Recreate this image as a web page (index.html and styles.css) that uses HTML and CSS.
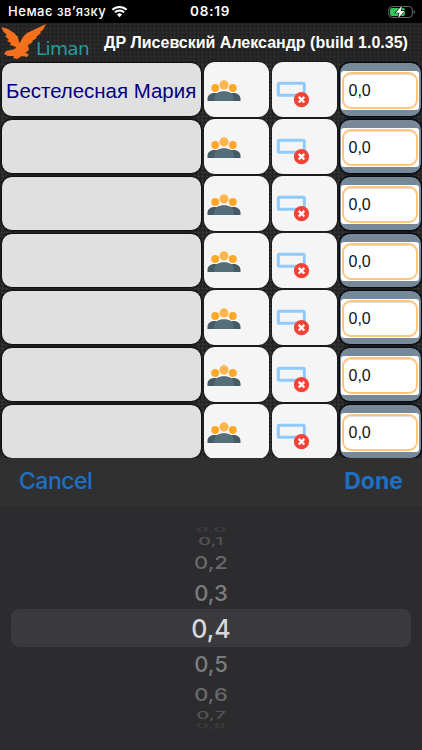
FILE: index.html
```html
<!DOCTYPE html>
<html lang="uk">
<head>
<meta charset="utf-8">
<title>Liman</title>
<link rel="stylesheet" href="styles.css">
</head>
<body>
<svg class="defs" aria-hidden="true">
  <symbol id="people" viewBox="0 0 34 22">
    <circle cx="8.2" cy="8" r="3.9" fill="#ffa726"/>
    <circle cx="25.8" cy="8" r="3.9" fill="#ffa726"/>
    <path d="M.5 21v-2.2c0-3.7 3.4-5.7 7.5-5.7 3 0 5.500 1 6.800 3V21zM33.500 21v-2.200c0-3.700-3.400-5.700-7.500-5.700-3 0-5.500 1-6.800 3V21z" fill="#455a64"/>
    <circle cx="17" cy="4.900" r="4.600" fill="#ffb74d"/>
    <path d="M7.200 21v-2.800c0-4.600 4.300-6.900 9.800-6.900s9.800 2.300 9.800 6.900V21z" fill="#546e7a"/>
  </symbol>
  <symbol id="remove" viewBox="0 0 34 28">
    <rect x="2.300" y="2.300" width="26" height="12" rx="1" fill="none" stroke="#90caf9" stroke-width="3"/>
    <circle cx="25.500" cy="18.700" r="7.600" fill="#f44336"/>
    <path d="M22.700 15.900l5.600 5.600m0-5.600l-5.600 5.600" stroke="#fff" stroke-width="2.300"/>
  </symbol>
</svg>
<header class="status">
  <span class="carrier">Немає зв’язку</span>
  <svg class="wifi" viewBox="0 0 18 13"><path d="M1.500 4.700a10.800 10.800 0 0 1 15 0M4.200 7.400a7 7 0 0 1 9.600 0" fill="none" stroke="#fff" stroke-width="2.200"/><path d="M6.300 9.600a4 4 0 0 1 5.400 0L9 12.500z" fill="#fff"/></svg>
  <span class="clock">08:19</span>
  <svg class="battery" viewBox="0 0 28 14"><rect x=".7" y="1.500" width="23.600" height="11" rx="3.500" fill="none" stroke="#68686c"/><path d="M25.700 5v4q1.300-.6 1.300-2t-1.300-2" fill="#68686c"/><rect x="2" y="3" width="15" height="8" rx="2" fill="#34c759"/><path d="M14 .8L7.500 7.700h4L10 13.200l6.700-7.300h-4z" fill="#fff" stroke="#000" stroke-width="1.200" paint-order="stroke"/></svg>
</header>
<main class="app">
  <div class="title-bar">
    <svg class="bird" viewBox="0 0 46 36"><path d="M.5 4L7 6l6 4 4 4 1 5 1 1Q21 14 26 10L45 1l-3 6-3 2 1 1-5 4 1 1-5 3 1 1-5 3 1 5-4 3 4 1-2 3-5-1-5 3-4-1 1-2-6 0-4-2 2-3 5-1 4-1 1-2-6-2 1-2-4-2 2-1-4-4 2-1-4-4z" fill="#f4701c"/></svg>
    <span class="brand">Liman</span>
    <h1>ДР Лисевский Александр (build 1.0.35)</h1>
  </div>
  <div class="table">
    <div class="cell name">Бестелесная Мария</div><div class="cell"><svg class="people"><use href="#people"/></svg></div><div class="cell"><svg class="remove"><use href="#remove"/></svg></div><div class="cell amount"><div class="field"><span>0,0</span></div></div>
    <div class="cell name"></div><div class="cell"><svg class="people"><use href="#people"/></svg></div><div class="cell"><svg class="remove"><use href="#remove"/></svg></div><div class="cell amount"><div class="field"><span>0,0</span></div></div>
    <div class="cell name"></div><div class="cell"><svg class="people"><use href="#people"/></svg></div><div class="cell"><svg class="remove"><use href="#remove"/></svg></div><div class="cell amount"><div class="field"><span>0,0</span></div></div>
    <div class="cell name"></div><div class="cell"><svg class="people"><use href="#people"/></svg></div><div class="cell"><svg class="remove"><use href="#remove"/></svg></div><div class="cell amount"><div class="field"><span>0,0</span></div></div>
    <div class="cell name"></div><div class="cell"><svg class="people"><use href="#people"/></svg></div><div class="cell"><svg class="remove"><use href="#remove"/></svg></div><div class="cell amount"><div class="field"><span>0,0</span></div></div>
    <div class="cell name"></div><div class="cell"><svg class="people"><use href="#people"/></svg></div><div class="cell"><svg class="remove"><use href="#remove"/></svg></div><div class="cell amount"><div class="field"><span>0,0</span></div></div>
    <div class="cell name"></div><div class="cell"><svg class="people"><use href="#people"/></svg></div><div class="cell"><svg class="remove"><use href="#remove"/></svg></div><div class="cell amount"><div class="field"><span>0,0</span></div></div>
  </div>
</main>
<section class="sheet">
  <div class="toolbar"><span class="cancel">Cancel</span><span class="done">Done</span></div>
  <div class="picker">
    <div class="opt far"><span>0,0</span></div>
    <div class="opt edge"><span>0,1</span></div>
    <div class="opt mid"><span>0,2</span></div>
    <div class="opt near"><span>0,3</span></div>
    <div class="opt selected"><span>0,4</span></div>
    <div class="opt near"><span>0,5</span></div>
    <div class="opt mid"><span>0,6</span></div>
    <div class="opt edge"><span>0,7</span></div>
    <div class="opt far"><span>0,8</span></div>
  </div>
</section>
</body>
</html>
```
FILE: styles.css
```css
* { box-sizing: border-box; }
body {
  margin: 0;
  width: 422px;
  height: 750px;
  overflow: hidden;
  display: flex;
  flex-direction: column;
  background: #2c2c2e;
  font-family: "Liberation Sans", Arial, sans-serif;
}
.defs { display: none; }
svg { display: block; flex: none; }

.status {
  height: 23px;
  flex: none;
  display: flex;
  align-items: center;
  background: #000;
  color: #fff;
  font: 500 13px/23px Inter, sans-serif;
  padding-left: 8px;
}
.carrier { width: 98px; white-space: nowrap; letter-spacing: 0.53px; }
.wifi { width: 17px; height: 13px; margin-left: 5px; }
.clock { width: 42px; margin-left: 62px; font-weight: 600; font-size: 13.5px; letter-spacing: 0.8px; white-space: nowrap; }
.battery { width: 28px; height: 14px; margin-left: 156px; }

.app {
  height: 435px;
  flex: none;
  overflow: hidden;
  background-color: #292929;
  background-image:
    linear-gradient(45deg, #1f1f1f 25%, transparent 25%, transparent 75%, #1f1f1f 75%),
    linear-gradient(45deg, #383838 25%, transparent 25%, transparent 75%, #343434 75%);
  background-size: 4px 4px;
  background-position: 0 0, 2px 2px;
}
.title-bar {
  height: 39px;
  display: flex;
  align-items: flex-start;
  background: linear-gradient(rgba(34, 34, 34, 0.5), rgba(34, 34, 34, 0.5));
}
.bird { width: 46px; height: 36px; margin-left: 1px; }
.brand {
  width: 56px;
  margin: 15px 0 0 -11px;
  color: #269a9d;
  font: 18.5px/22px "DejaVu Sans", sans-serif;
  letter-spacing: -0.7px;
}
h1 {
  margin: 10px 0 0 12px;
  color: #fff;
  font-size: 16px;
  line-height: 20px;
  font-weight: bold;
  white-space: nowrap;
}
.table {
  display: grid;
  grid-template-columns: 201px 65px 65px 83px;
  grid-auto-rows: 55px;
  column-gap: 2.5px;
  row-gap: 2px;
  padding-left: 0.5px;
}
.cell {
  border-radius: 11px;
  background: #f5f5f5;
  box-shadow: 0 0 1px 1px rgba(0, 0, 0, 0.3);
}
.name {
  display: flex;
  align-items: center;
  padding: 2px 0 0 4.5px;
  border: 1px solid #111;
  background: #e0e0e0;
  box-shadow: 0 0 0 0.5px #141414;
  color: #000080;
  font-size: 20.45px;
  white-space: nowrap;
}
.people { width: 34px; height: 22px; margin: 17.5px 0 0 2.5px; }
.remove { width: 34px; height: 28px; margin: 19px 0 0 4px; }
.amount {
  padding: 8px 2px 0 1px;
  border: 1px solid #050a12;
  background: #778899;
  box-shadow: 0 0 0 0.5px #080b10;
}
.field { height: 39px; padding: 1px; background: #fff; border-radius: 3px; }
.field span {
  display: flex;
  align-items: center;
  height: 37px;
  padding-left: 4.5px;
  border: 2px solid #ffc67c;
  border-radius: 9px;
  box-shadow: inset 0 2px 0 -1px #ddd;
  color: #111;
  font-size: 16px;
}

.sheet { flex: 1; background: #2c2c2e; }
.toolbar {
  height: 48px;
  display: flex;
  justify-content: space-between;
  padding: 0 19px;
  background: #303030;
  color: #1d70c5;
  font: 500 23px/46px Inter, sans-serif;
}
.cancel { letter-spacing: -0.5px; }
.done { font-weight: 700; }
.picker { padding: 20px 11px 0; font-family: Inter, sans-serif; font-weight: 500; }
.opt { display: flex; align-items: center; justify-content: center; font-size: 22px; line-height: 28px; }
.near { height: 33px; color: #7c7c7e; }
.mid { height: 28px; padding-top: 2px; color: #69696b; }
.mid span { transform: scaleY(0.8); }
.edge { height: 14px; color: #535355; }
.edge span { transform: scale(0.92, 0.5); }
.far { height: 8px; color: #3e3e40; }
.far span { transform: scale(0.9, 0.25); }
.selected { height: 38px; padding-top: 2px; border-radius: 8px; background: #3a3a3e; color: #d8d8da; font-size: 25px; }
```
